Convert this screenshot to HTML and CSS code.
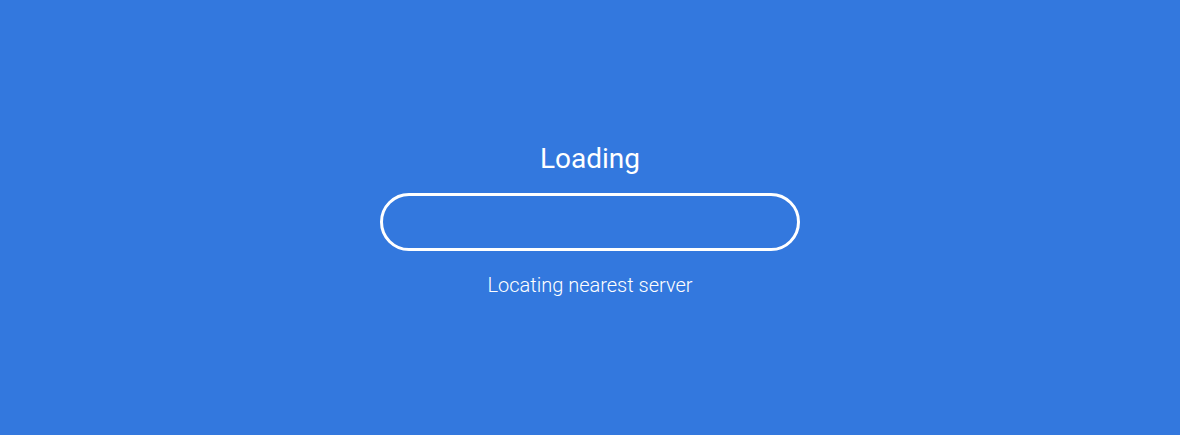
FILE: index.html
```html
<!DOCTYPE html>
<html>
<head>
<meta charset="utf-8">
<link rel="stylesheet" href="styles.css">
</head>
<body>
<div class="page">
  <div class="loader">
    <div class="title">Loading</div>
    <div class="bar"></div>
    <div class="status">Locating nearest server</div>
  </div>
</div>
</body>
</html>
```
FILE: styles.css
```css
html, body { margin: 0; padding: 0; }
body { background: #3378de; font-family: Roboto, "Noto Sans", sans-serif; color: #fff; }
.page { box-sizing: border-box; width: 1180px; height: 435px; padding-top: 4px; display: flex; align-items: center; justify-content: center; }
.loader { display: flex; flex-direction: column; align-items: center; }
.title { font-size: 28px; line-height: 32px; }
.bar { box-sizing: border-box; width: 420px; height: 58px; border: 3px solid #fff; border-radius: 29px; margin-top: 18px; }
.status { font-size: 20px; font-weight: 300; line-height: 24px; margin-top: 22px; }
```
